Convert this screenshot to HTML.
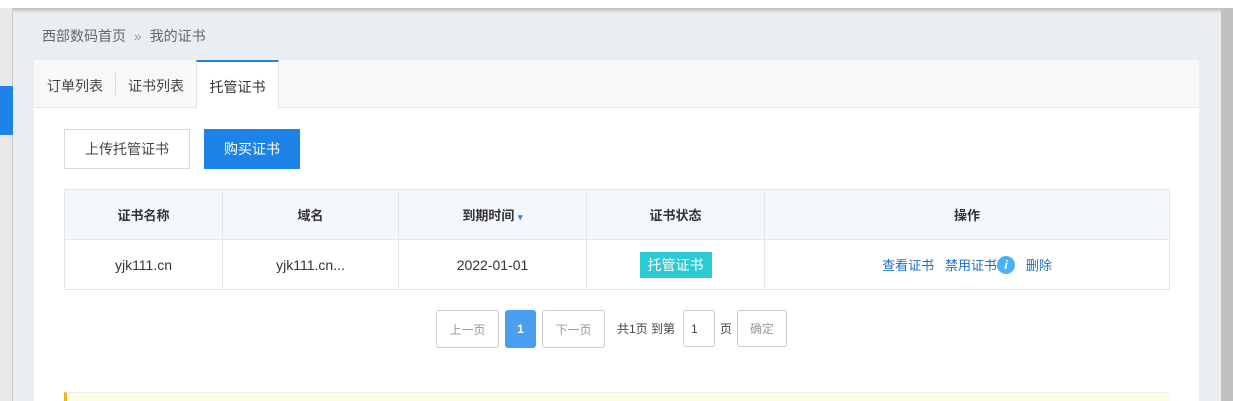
<!DOCTYPE html><html><head><meta charset="utf-8"><style>
*{margin:0;padding:0;box-sizing:border-box}
html,body{width:1233px;height:401px;overflow:hidden}
body{background:#eaedf1;font-family:"Liberation Sans","Noto Sans CJK SC",sans-serif;font-size:13px;color:#333;position:relative}
.a{position:absolute}
.tb{border:1px solid #ccc;border-radius:3px;background:#fff;color:#999;font-size:12px;display:flex;align-items:center;justify-content:center}
td,th{border:1px solid #e6e6e6;text-align:center}
</style></head><body>
<div class="a" style="left:0;top:0;width:1233px;height:8px;background:#fff;box-shadow:0 2px 4px rgba(0,0,0,.25)"></div>
<div class="a" style="left:0;top:8px;width:13px;height:393px;background:#e8e8e8;border-right:1px solid #ccc"></div>
<div class="a" style="left:0;top:86px;width:13px;height:49px;background:#1e83e9"></div>
<div class="a" style="left:1221px;top:8px;width:12px;height:393px;background:#c1c1c1"></div>
<div class="a" style="left:42px;top:26px;color:#666;font-size:14px">西部数码首页 <span style="color:#999;margin:0 4px">»</span> 我的证书</div>
<div class="a" style="left:34px;top:60px;width:1165px;height:341px;background:#fff"></div>
<div class="a" style="left:34px;top:60px;width:1165px;height:48px;background:#f8f8f8;border-bottom:1px solid #e6e6e6"></div>
<div class="a" style="left:47px;top:76px;font-size:14px;color:#444">订单列表</div>
<div class="a" style="left:115px;top:73px;width:1px;height:22px;background:#ddd"></div>
<div class="a" style="left:128px;top:76px;font-size:14px;color:#444">证书列表</div>
<div class="a" style="left:196px;top:60px;width:83px;height:49px;background:#fff;border-top:2px solid #1e83e9;border-left:1px solid #e6e6e6;border-right:1px solid #e6e6e6;text-align:center;padding-top:15px;font-size:14px;color:#333">托管证书</div>
<div class="a tb" style="left:64px;top:129px;width:126px;height:40px;border-color:#d8d8d8;border-radius:0;color:#444;font-size:14px">上传托管证书</div>
<div class="a" style="left:204px;top:129px;width:96px;height:40px;background:#1e83e9;color:#fff;font-size:14px;display:flex;align-items:center;justify-content:center">购买证书</div>
<table class="a" style="left:64px;top:189px;width:1106px;border-collapse:collapse;font-size:14px">
<tr style="height:50px;background:#f4f7fb;font-weight:bold;color:#333;font-size:13px"><th style="width:158px">证书名称</th><th style="width:176px">域名</th><th style="width:188px">到期时间 <span style="font-size:9px;color:#1e83e9">▾</span></th><th style="width:178px">证书状态</th><th>操作</th></tr>
<tr style="height:50px;color:#333"><td>yjk111.cn</td><td>yjk111.cn...</td><td>2022-01-01</td><td><span style="background:#2bcbd3;color:#fff;padding:5px 8px">托管证书</span></td>
<td style="color:#1c6ec5;font-size:13px">查看证书&nbsp;&nbsp; 禁用证书<span style="display:inline-block;width:18px;height:18px;border-radius:50%;background:#4bb3f5;color:#fff;font-style:italic;font-weight:bold;font-size:12px;line-height:18px;vertical-align:middle;margin-top:-3px">i</span>&nbsp;&nbsp; 删除</td></tr>
</table>
<div class="a tb" style="left:436px;top:310px;width:63px;height:38px">上一页</div>
<div class="a" style="left:505px;top:310px;width:31px;height:38px;background:#4a9ff0;border-radius:3px;color:#fff;font-weight:bold;font-size:12px;display:flex;align-items:center;justify-content:center">1</div>
<div class="a tb" style="left:542px;top:310px;width:63px;height:38px">下一页</div>
<div class="a" style="left:617px;top:320px;font-size:12px;color:#444">共1页 到第</div>
<div class="a tb" style="left:683px;top:310px;width:32px;height:37px;justify-content:flex-start;padding-left:7px;color:#444">1</div>
<div class="a" style="left:720px;top:320px;font-size:12px;color:#444">页</div>
<div class="a tb" style="left:737px;top:310px;width:50px;height:37px">确定</div>
<div class="a" style="left:64px;top:392px;width:1106px;height:9px;background:#fefbe6;border-top:1px solid #eee;border-left:3px solid #f5b31b"></div>
</body></html>
